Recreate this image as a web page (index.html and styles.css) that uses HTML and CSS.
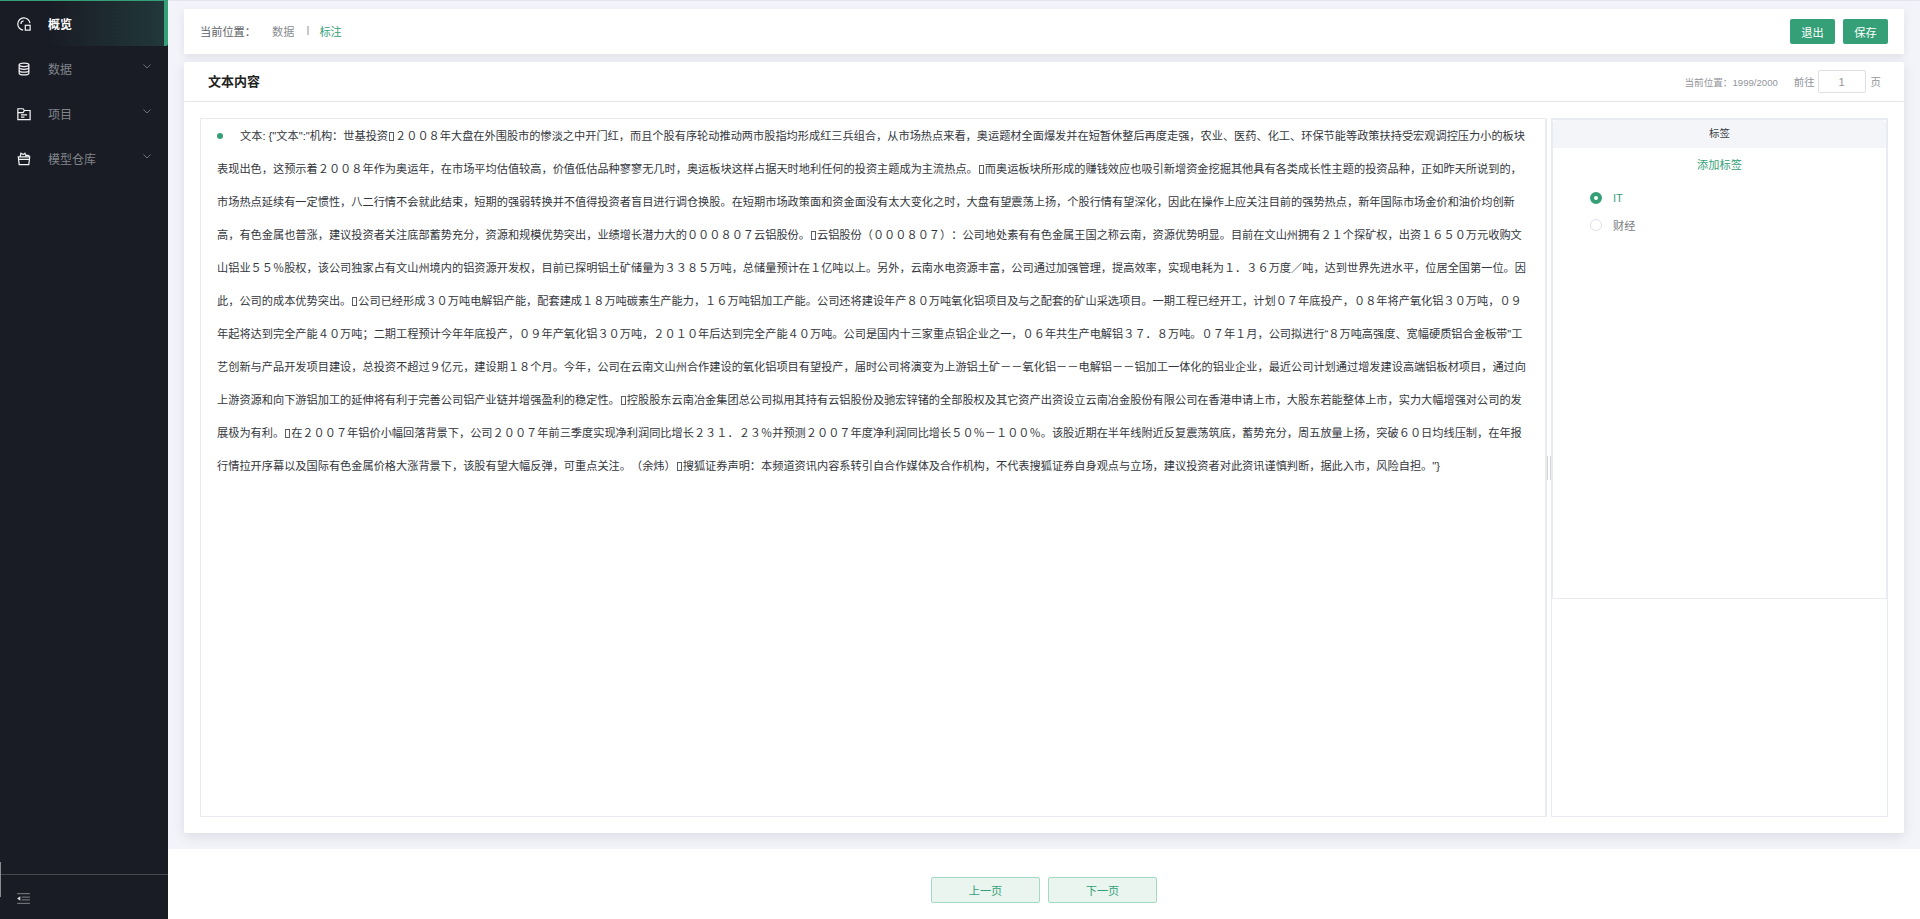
FILE: index.html
```html
<!DOCTYPE html>
<html lang="zh-CN">
  <head>
    <meta charset="utf-8" />
    <title>标注</title>
    <meta name="viewport" content="width=device-width, initial-scale=1" />
    <link rel="stylesheet" href="styles.css">
  </head>
  <body>
    <aside class="sidebar">
      <ul class="menu">
        <li class="menu-item active">
          <svg class="menu-icon" viewBox="0 0 16 16"><path d="M14.800 7A7 7 0 1 0 7 15"/><path d="M7.500 4.500A3.500 3.500 0 0 0 4.500 8"/><rect x="9.500" y="9.500" width="5.500" height="5.500"/></svg>
          <span>概览</span>
        </li>
        <li class="menu-item">
          <svg class="menu-icon" viewBox="0 0 16 16"><ellipse cx="8" cy="3.200" rx="5.500" ry="2"/><path d="M2.500 3.200v9.600c0 1.100 2.500 2 5.500 2s5.500-.9 5.500-2V3.200"/><path d="M2.500 6.400c0 1.100 2.500 2 5.500 2s5.500-.9 5.500-2M2.500 9.600c0 1.100 2.500 2 5.500 2s5.500-.9 5.500-2"/></svg>
          <span>数据</span>
          <svg class="chevron" viewBox="0 0 8 5"><path d="M.5.5 4 4 7.500.5"/></svg>
        </li>
        <li class="menu-item">
          <svg class="menu-icon" viewBox="0 0 16 16"><path d="M1 14.500V2h6l1.500 2H15v10.500z"/><path d="M1 6.500h6l1.500-2.500M4.500 9h7M4.500 11.500h4"/></svg>
          <span>项目</span>
          <svg class="chevron" viewBox="0 0 8 5"><path d="M.5.5 4 4 7.500.5"/></svg>
        </li>
        <li class="menu-item">
          <svg class="menu-icon" viewBox="0 0 16 16"><path d="M1.500 5.500h13l-1 9h-11z"/><path d="M3.500 5.500 4.500 1.500 7 3l2-1.500 1.500 4M10.500 3.500l3 .5.500 1.500M1.500 8.500h13"/></svg>
          <span>模型仓库</span>
          <svg class="chevron" viewBox="0 0 8 5"><path d="M.5.5 4 4 7.500.5"/></svg>
        </li>
      </ul>
      <div class="collapse">
        <svg class="collapse-icon" viewBox="0 0 14 12"><path d="M0 .75h14M5 4.500h9M5 7.500h9M0 11.250h14"/><path class="solid" d="M3.500 3.500v5L0 6z"/></svg>
      </div>
      <span class="edge-handle"></span>
    </aside>

    <div class="content">
      <main class="workspace">
        <header class="topbar">
          <span class="crumb-label">当前位置：</span>
          <span class="crumb">数据</span>
          <span class="crumb-sep"></span>
          <span class="crumb-current">标注</span>
          <span class="topbar-actions">
            <button class="btn" type="button">退出</button>
            <button class="btn" type="button">保存</button>
          </span>
        </header>

        <section class="card">
          <div class="card-head">
            <h2>文本内容</h2>
            <div class="pager">
              <span class="pager-pos">当前位置：1999/2000</span>
              <span class="pager-go">前往</span>
              <input class="pager-input" type="text" value="1" />
              <span class="pager-unit">页</span>
            </div>
          </div>
          <div class="card-body">
            <div class="text-box">
              <p class="text-line"><span class="dot"></span>文本: {"文本":"机构：世基投资<span class="tofu"></span>２００８年大盘在外围股市的惨淡之中开门红，而且个股有序轮动推动两市股指均形成红三兵组合，从市场热点来看，奥运题材全面爆发并在短暂休整后再度走强，农业、医药、化工、环保节能等政策扶持受宏观调控压力小的板块<br>表现出色，这预示着２００８年作为奥运年，在市场平均估值较高，价值低估品种寥寥无几时，奥运板块这样占据天时地利任何的投资主题成为主流热点。<span class="tofu"></span>而奥运板块所形成的赚钱效应也吸引新增资金挖掘其他具有各类成长性主题的投资品种，正如昨天所说到的，<br>市场热点延续有一定惯性，八二行情不会就此结束，短期的强弱转换并不值得投资者盲目进行调仓换股。在短期市场政策面和资金面没有太大变化之时，大盘有望震荡上扬，个股行情有望深化，因此在操作上应关注目前的强势热点，新年国际市场金价和油价均创新<br>高，有色金属也普涨，建议投资者关注底部蓄势充分，资源和规模优势突出，业绩增长潜力大的０００８０７云铝股份。<span class="tofu"></span>云铝股份（０００８０７）：公司地处素有有色金属王国之称云南，资源优势明显。目前在文山州拥有２１个探矿权，出资１６５０万元收购文<br>山铝业５５％股权，该公司独家占有文山州境内的铝资源开发权，目前已探明铝土矿储量为３３８５万吨，总储量预计在１亿吨以上。另外，云南水电资源丰富，公司通过加强管理，提高效率，实现电耗为１．３６万度／吨，达到世界先进水平，位居全国第一位。因<br>此，公司的成本优势突出。<span class="tofu"></span>公司已经形成３０万吨电解铝产能，配套建成１８万吨碳素生产能力，１６万吨铝加工产能。公司还将建设年产８０万吨氧化铝项目及与之配套的矿山采选项目。一期工程已经开工，计划０７年底投产，０８年将产氧化铝３０万吨，０９<br>年起将达到完全产能４０万吨；二期工程预计今年年底投产，０９年产氧化铝３０万吨，２０１０年后达到完全产能４０万吨。公司是国内十三家重点铝企业之一，０６年共生产电解铝３７．８万吨。０７年１月，公司拟进行“８万吨高强度、宽幅硬质铝合金板带"工<br>艺创新与产品开发项目建设，总投资不超过９亿元，建设期１８个月。今年，公司在云南文山州合作建设的氧化铝项目有望投产，届时公司将演变为上游铝土矿－－氧化铝－－电解铝－－铝加工一体化的铝业企业，最近公司计划通过增发建设高端铝板材项目，通过向<br>上游资源和向下游铝加工的延伸将有利于完善公司铝产业链并增强盈利的稳定性。<span class="tofu"></span>控股股东云南冶金集团总公司拟用其持有云铝股份及驰宏锌锗的全部股权及其它资产出资设立云南冶金股份有限公司在香港申请上市，大股东若能整体上市，实力大幅增强对公司的发<br>展极为有利。<span class="tofu"></span>在２００７年铝价小幅回落背景下，公司２００７年前三季度实现净利润同比增长２３１．２３％并预测２００７年度净利润同比增长５０％－１００％。该股近期在半年线附近反复震荡筑底，蓄势充分，周五放量上扬，突破６０日均线压制，在年报<br>行情拉开序幕以及国际有色金属价格大涨背景下，该股有望大幅反弹，可重点关注。（余炜）<span class="tofu"></span>搜狐证券声明：本频道资讯内容系转引自合作媒体及合作机构，不代表搜狐证券自身观点与立场，建议投资者对此资讯谨慎判断，据此入市，风险自担。"}</p>
              <span class="split-handle"></span>
            </div>
            <div class="label-box">
              <div class="label-panel">
                <div class="label-title">标签</div>
                <div class="label-add">添加标签</div>
                <ul class="label-list">
                  <li class="label-item checked"><span class="radio"></span>IT</li>
                  <li class="label-item"><span class="radio"></span>财经</li>
                </ul>
              </div>
            </div>
          </div>
        </section>
      </main>

      <footer class="footer">
        <button class="btn-light" type="button">上一页</button>
        <button class="btn-light" type="button">下一页</button>
      </footer>
    </div>
  </body>
</html>
```

FILE: styles.css
```css
* {
  box-sizing: border-box;
}
html,
body {
  height: 100%;
}
body {
  margin: 0;
  display: flex;
  overflow: hidden;
  font-family: "Liberation Sans", "Noto Sans CJK SC", sans-serif;
  font-size: 11.2px;
  color: #3a3d44;
  background: #fff;
  text-spacing-trim: space-all;
}
ul {
  list-style: none;
  margin: 0;
  padding: 0;
}
button {
  font: inherit;
  cursor: pointer;
}

/* sidebar */
.sidebar {
  position: relative;
  width: 168px;
  flex: none;
  display: flex;
  flex-direction: column;
  background: #191c24;
  border-top: 1px solid #35a077;
}
.menu {
  flex: 1;
  font-size: 12px;
}
.menu-item {
  display: flex;
  align-items: center;
  height: 45px;
  padding-left: 17px;
  color: #81848b;
}
.menu-item span {
  margin-left: 17px;
}
.menu-item.active {
  color: #fff;
  font-weight: bold;
  background: linear-gradient(90deg, #191c24 30%, #21383a 100%);
  border-right: 4px solid #35a077;
  border-bottom-right-radius: 2px;
}
.menu-icon {
  width: 14px;
  height: 14px;
  fill: none;
  stroke: #f2f3f4;
  stroke-width: 1.4;
}
.chevron {
  width: 8px;
  height: 5px;
  margin-left: auto;
  margin-right: 17px;
  margin-top: -4px;
  fill: none;
  stroke: #6d7077;
}
.collapse {
  height: 45px;
  padding: 18px 0 0 17px;
  border-top: 1px solid #46484e;
}
.collapse-icon {
  display: block;
  width: 13px;
  height: 11px;
  fill: none;
  stroke: #8a8c91;
}
.collapse-icon .solid {
  fill: #d8d9db;
  stroke: none;
}
.edge-handle {
  position: absolute;
  left: 0;
  bottom: 22px;
  width: 1px;
  height: 35px;
  background: #8a8c91;
}

/* main column */
.content {
  flex: 1;
  min-width: 0;
  display: flex;
  flex-direction: column;
}
.workspace {
  height: 849px;
  display: flex;
  flex-direction: column;
  gap: 8px;
  padding: 8px 16px 16px;
  background: #f3f4f9;
  border-top: 1px solid #e3e5ee;
}
.topbar {
  height: 45px;
  flex: none;
  display: flex;
  align-items: center;
  padding: 0 16px;
  background: #fff;
  box-shadow: 0 3px 8px rgba(60, 65, 90, 0.1);
  color: #8a8c92;
}
.crumb-label,
.crumb,
.crumb-current {
  margin-bottom: 2px;
}
.crumb-label {
  color: #5c5f66;
  width: 72px;
}
.crumb-sep {
  width: 2px;
  height: 9px;
  margin: 0 10px 2px 13px;
  background: #c6c8ce;
}
.crumb-current {
  color: #35a077;
}
.topbar-actions {
  margin-left: auto;
  display: flex;
  gap: 8px;
}
.btn {
  width: 45px;
  height: 25px;
  padding: 0;
  border: 0;
  border-radius: 2px;
  background: #35a077;
  color: #fff;
}

/* card */
.card {
  flex: 1;
  min-height: 0;
  display: flex;
  flex-direction: column;
  background: #fff;
  border-radius: 2px;
  box-shadow: 0 4px 12px rgba(60, 65, 90, 0.12);
}
.card-head {
  height: 40px;
  flex: none;
  display: flex;
  align-items: center;
  justify-content: space-between;
  padding: 0 23px 0 24px;
  border-bottom: 1px solid #e6e7ee;
}
.card-head h2 {
  margin: 0 0 2px;
  font-size: 13px;
  font-weight: bold;
  color: #222;
}
.pager {
  display: flex;
  align-items: center;
  color: #93959b;
  font-size: 9.6px;
}
.pager-pos {
  margin-right: 16px;
}
.pager-go {
  margin-right: 3px;
  font-size: 10.4px;
}
.pager-unit {
  font-size: 10.4px;
}
.pager-input {
  width: 48px;
  height: 23px;
  margin-right: 5px;
  border: 1px solid #dfe0e8;
  border-radius: 2px;
  text-align: center;
  font: inherit;
  font-size: 11.2px;
  color: #93959b;
}
.card-body {
  flex: 1;
  min-height: 0;
  display: flex;
  gap: 4px;
  padding: 16px;
}
.text-box {
  position: relative;
  width: 1347px;
  flex: none;
  padding: 1px 9px 0 16px;
  border: 1px solid #e9ebf3;
  border-right: 2px solid #ebebee;
}
.text-line {
  margin: 0;
  line-height: 33px;
  white-space: nowrap;
  color: #33363c;
}
.dot {
  display: inline-block;
  width: 6px;
  height: 6px;
  margin: 0 17px 1px 0;
  border-radius: 50%;
  background: #35a077;
}
.tofu {
  display: inline-block;
  width: 5px;
  height: 9px;
  margin: 0 1px;
  border: 1px solid #5a5d64;
  vertical-align: -1px;
}
.split-handle {
  position: absolute;
  right: -6px;
  top: 337px;
  width: 4px;
  height: 24px;
  border-left: 1px solid #d3d3d6;
  border-right: 1px solid #d3d3d6;
}
.label-box {
  flex: 1;
  border: 1px solid #e9ebf3;
}
.label-panel {
  height: 480px;
  border: 1px solid #e9ebf3;
}
.label-title {
  height: 28px;
  line-height: 28px;
  text-align: center;
  font-size: 10.4px;
  color: #3a3d44;
  background: #f4f5f9;
  border-radius: 4px 4px 0 0;
}
.label-add {
  margin-top: 9px;
  text-align: center;
  color: #35a077;
  line-height: 16px;
}
.label-list {
  padding: 11px 0 0 37px;
}
.label-item {
  display: flex;
  align-items: center;
  gap: 11px;
  height: 27px;
  color: #7a7d83;
}
.label-item.checked {
  color: #35a077;
}
.radio {
  width: 12px;
  height: 12px;
  border: 1px solid #dfe0e8;
  border-radius: 50%;
  background: #fff;
}
.label-item.checked .radio {
  border: 4px solid #35a077;
}

/* footer */
.footer {
  flex: 1;
  display: flex;
  justify-content: center;
  gap: 8px;
  padding-top: 28px;
  background: #fff;
}
.btn-light {
  width: 109px;
  height: 26px;
  padding: 0;
  border: 1px solid #a6d9c4;
  border-radius: 2px;
  background: #e9f5ee;
  color: #35a077;
}
```
